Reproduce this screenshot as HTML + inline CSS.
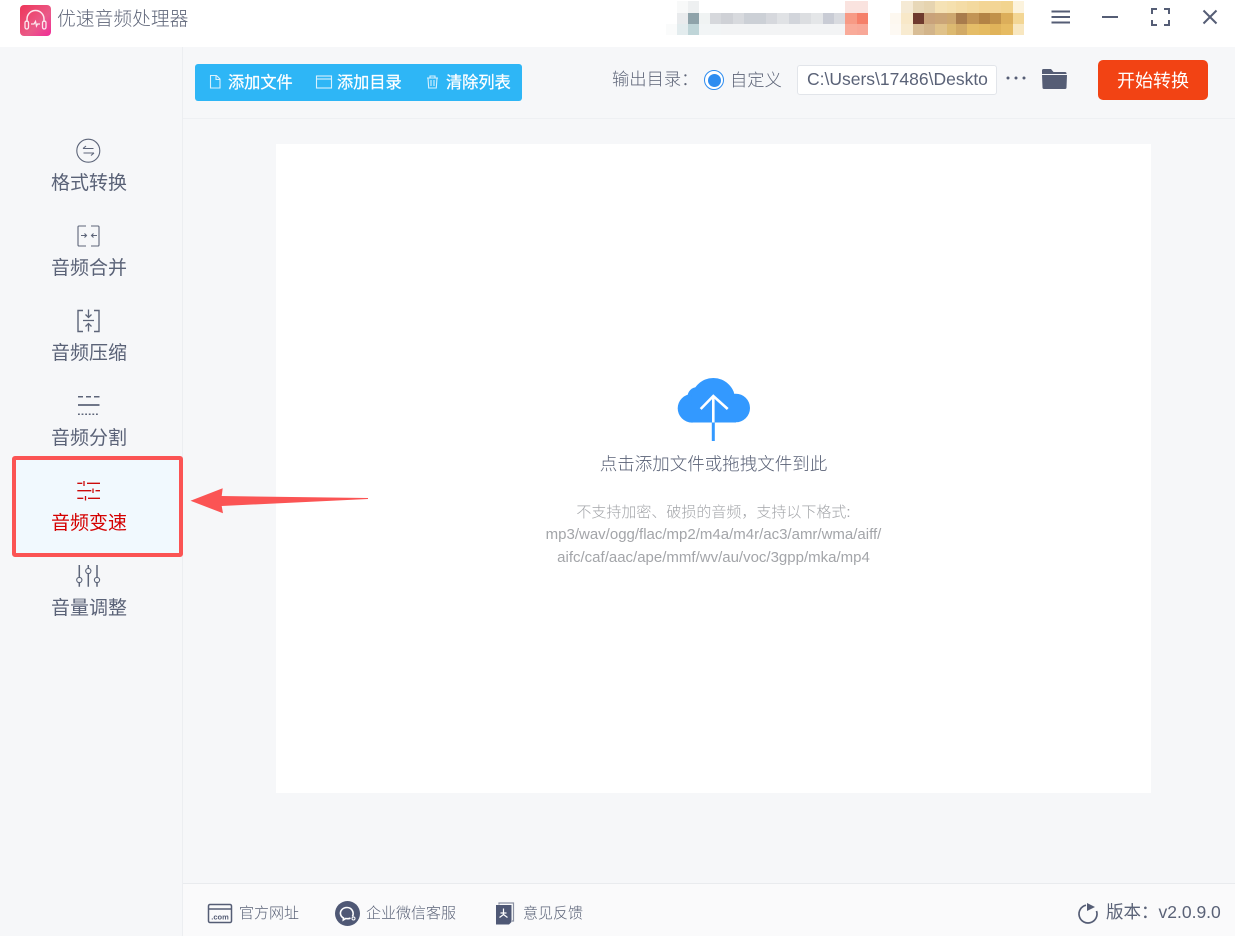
<!DOCTYPE html>
<html lang="zh"><head><meta charset="utf-8"><title>优速音频处理器</title>
<style>
*{margin:0;padding:0;box-sizing:border-box}
html,body{width:1235px;height:936px;overflow:hidden;background:#f6f7f9}
body{position:relative;font-family:"Liberation Sans","Noto Sans CJK SC",sans-serif;color:#5a6277}
.t{position:absolute;white-space:nowrap;line-height:1.2;font-weight:300}
.a{position:absolute;display:block}
.n{position:absolute;left:0;width:178px;text-align:center;font-size:19px;line-height:24px;color:#5a6277;white-space:nowrap}
</style></head><body>
<div class="a" style="left:0;top:0;width:1235px;height:47px;background:#fff"></div>
<div class="a" style="left:182px;top:47px;width:1px;height:889px;background:#eceef1"></div>
<div class="a" style="left:183px;top:118px;width:1052px;height:1px;background:#eef0f3"></div>
<div class="a" style="left:183px;top:883px;width:1052px;height:53px;background:#fafafb;border-top:1px solid #e9ebee"></div>
<div class="a" style="left:276px;top:144px;width:875px;height:649px;background:#fff"></div>

<!-- logo -->
<svg class="a" style="left:20px;top:5px" width="31" height="31" viewBox="0 0 31 31">
<defs><linearGradient id="g" x1="0" y1="0" x2="1" y2="1"><stop offset="0" stop-color="#ee3558"/><stop offset=".6" stop-color="#ea5a88"/><stop offset="1" stop-color="#f02c98"/></linearGradient></defs>
<rect width="31" height="31" rx="4" fill="url(#g)"/>
<path d="M7 17V14a8.500 8.500 0 0 1 17 0v3" fill="none" stroke="#fde6ee" stroke-width="1.500"/>
<rect x="5" y="16" width="3.500" height="8" rx="1.700" fill="none" stroke="#fde6ee" stroke-width="1.300"/>
<rect x="22.500" y="16" width="3.500" height="8" rx="1.700" fill="none" stroke="#fde6ee" stroke-width="1.300"/>
<path d="M11 19h3l1.500-2.500 1 4.500 1-2h2.500" fill="none" stroke="#fde6ee" stroke-width="1.300"/>
</svg>
<div class="t" style="left:57px;top:8px;font-size:18.800px;color:#5f6679">优速音频处理器</div>

<!-- blurred pixels -->
<svg class="a" style="left:0;top:0" width="1235" height="36" viewBox="0 0 1235 36" shape-rendering="crispEdges">
<rect x="677" y="1" width="11" height="12" fill="#f8f9f9"/><rect x="688" y="1" width="11" height="12" fill="#eef0f1"/>
<rect x="845" y="1" width="23" height="12" fill="#fae3df"/>
<rect x="677" y="13" width="11" height="11" fill="#e9ebed"/><rect x="688" y="13" width="11" height="11" fill="#8fa3aa"/><rect x="699" y="13" width="11" height="11" fill="#f0f3f3"/><rect x="710" y="13" width="11" height="11" fill="#d6d8dc"/><rect x="721" y="13" width="12" height="11" fill="#cfd1d6"/><rect x="733" y="13" width="11" height="11" fill="#d8dade"/><rect x="744" y="13" width="22" height="11" fill="#ccd0d6"/><rect x="766" y="13" width="11" height="11" fill="#d6d8dd"/><rect x="777" y="13" width="12" height="11" fill="#e0e2e5"/><rect x="789" y="13" width="11" height="11" fill="#d2d5db"/><rect x="800" y="13" width="11" height="11" fill="#dcdee1"/><rect x="811" y="13" width="12" height="11" fill="#e4e6e8"/><rect x="823" y="13" width="11" height="11" fill="#c9ccd5"/><rect x="834" y="13" width="11" height="11" fill="#d9dbe0"/><rect x="845" y="13" width="12" height="11" fill="#f79a85"/><rect x="857" y="13" width="11" height="11" fill="#f5806a"/>
<rect x="666" y="24" width="11" height="11" fill="#fafbfb"/><rect x="677" y="24" width="11" height="11" fill="#e3ecee"/><rect x="688" y="24" width="11" height="11" fill="#bfd5d8"/><rect x="699" y="24" width="22" height="11" fill="#f2f5f6"/><rect x="721" y="24" width="124" height="11" fill="#f3f4f5"/><rect x="845" y="24" width="12" height="11" fill="#f9ab9a"/><rect x="857" y="24" width="11" height="11" fill="#f8a898"/>

<rect x="901" y="1" width="12" height="12" fill="#f5ead5"/><rect x="913" y="1" width="11" height="12" fill="#e8d8b8"/><rect x="924" y="1" width="11" height="12" fill="#e6d4b0"/><rect x="935" y="1" width="12" height="12" fill="#f5e2b5"/><rect x="947" y="1" width="9" height="12" fill="#f5e0ae"/><rect x="956" y="1" width="11" height="12" fill="#f4dca6"/><rect x="967" y="1" width="12" height="12" fill="#f3d99e"/><rect x="979" y="1" width="22" height="12" fill="#f3d595"/><rect x="1001" y="1" width="12" height="12" fill="#f2d48f"/><rect x="1013" y="1" width="11" height="12" fill="#fcf3dd"/>
<rect x="890" y="13" width="11" height="11" fill="#fdf8f0"/><rect x="901" y="13" width="12" height="11" fill="#f8e8c8"/><rect x="913" y="13" width="11" height="11" fill="#6f3a2e"/><rect x="924" y="13" width="11" height="11" fill="#c9a27a"/><rect x="935" y="13" width="12" height="11" fill="#cba577"/><rect x="947" y="13" width="9" height="11" fill="#cda76f"/><rect x="956" y="13" width="11" height="11" fill="#a87b4c"/><rect x="967" y="13" width="12" height="11" fill="#c29455"/><rect x="979" y="13" width="11" height="11" fill="#b38345"/><rect x="990" y="13" width="11" height="11" fill="#c19149"/><rect x="1001" y="13" width="12" height="11" fill="#dcae5a"/><rect x="1013" y="13" width="11" height="11" fill="#f3d694"/>
<rect x="890" y="24" width="11" height="11" fill="#fdf9f3"/><rect x="901" y="24" width="12" height="11" fill="#f8ebd0"/><rect x="913" y="24" width="11" height="11" fill="#d8bd95"/><rect x="924" y="24" width="11" height="11" fill="#d2b48a"/><rect x="935" y="24" width="12" height="11" fill="#e0c28a"/><rect x="947" y="24" width="9" height="11" fill="#dcb970"/><rect x="956" y="24" width="11" height="11" fill="#d2aa66"/><rect x="967" y="24" width="12" height="11" fill="#e5bd68"/><rect x="979" y="24" width="11" height="11" fill="#e5bb62"/><rect x="990" y="24" width="11" height="11" fill="#e0b35a"/><rect x="1001" y="24" width="12" height="11" fill="#e6bb62"/><rect x="1013" y="24" width="11" height="11" fill="#f8e7c0"/>
</svg>

<!-- window controls -->
<svg class="a" style="left:1045px;top:0" width="190" height="36" viewBox="0 0 190 36" fill="none" stroke="#555d75" stroke-width="2">
<path d="M6.500 11.500h18.500M6.500 17h18.500M6.500 22.500h18.500"/>
<path d="M57 17h16"/>
<path d="M107 14V9h5M119 9h5v5M124 20v5h-5M112 25h-5v-5"/>
<path d="M158.500 10.500l13 13M171.500 10.500l-13 13"/>
</svg>

<!-- toolbar -->
<div class="a" style="left:195px;top:64px;width:327px;height:37px;background:#2eb6f6;border-radius:3px"></div>
<svg class="a" style="left:195px;top:63px" width="327" height="37" viewBox="0 0 327 37" fill="none" stroke="#d8f1fd" stroke-width="1.100">
<path d="M15.500 12.500h6l3.500 3.500V25h-9.500zM21 12.500v4h4"/>
<rect x="121.500" y="13" width="15" height="12"/><path d="M121.500 16h15"/>
<path d="M232 15h11M235 15v-2h5v2M233 15l.7 10h7.600l.7-10M236 17v6M239 17v6"/>
</svg>
<div class="t" style="left:228px;top:74px;font-size:16.200px;color:#fff;font-weight:400;-webkit-text-stroke:.25px #fff">添加文件</div>
<div class="t" style="left:337px;top:74px;font-size:16.200px;color:#fff;font-weight:400;-webkit-text-stroke:.25px #fff">添加目录</div>
<div class="t" style="left:446px;top:74px;font-size:16.200px;color:#fff;font-weight:400;-webkit-text-stroke:.25px #fff">清除列表</div>

<div class="t" style="left:612px;top:69px;font-size:17.300px;color:#5e6578">输出目录&#xFF1A;</div>
<div class="a" style="left:704px;top:70px;width:20px;height:20px;border-radius:50%;border:1.500px solid #2d8cf0;background:#fff"></div>
<div class="a" style="left:707.500px;top:73.500px;width:13px;height:13px;border-radius:50%;background:#2d8cf0"></div>
<div class="t" style="left:730px;top:70px;font-size:17.300px;color:#5e6578">自定义</div>
<div class="a" style="left:797px;top:65px;width:200px;height:30px;background:#fff;border:1px solid #e2e5ea;border-radius:3px"></div>
<div class="t" style="left:807px;top:69px;font-size:17.500px;line-height:20px;color:#5a6277;font-weight:400">C:\Users\17486\Deskto</div>
<svg class="a" style="left:1005px;top:74px" width="22" height="8"><circle cx="3" cy="4" r="1.500" fill="#555d75"/><circle cx="11" cy="4" r="1.500" fill="#555d75"/><circle cx="19" cy="4" r="1.500" fill="#555d75"/></svg>
<svg class="a" style="left:1041px;top:67px" width="27" height="24" viewBox="0 0 27 24"><path d="M1 3.500Q1 2 2.500 2H10l2.500 3H24q1.500 0 1.500 1.500V7H1z" fill="#555d75"/><path d="M1 8h25l-.5 12.500q0 1.500-1.500 1.500H3q-1.500 0-1.500-1.500z" fill="#555d75"/></svg>
<div class="a" style="left:1098px;top:60px;width:110px;height:40px;background:#f24314;border-radius:5px"></div>
<div class="t" style="left:1117px;top:71px;font-size:18px;color:#fff;font-weight:400">开始转换</div>

<!-- sidebar -->
<div class="a" style="left:11.500px;top:456px;width:171px;height:101px;background:#f1f9fe;border:4.500px solid #fb5454;border-radius:3px"></div>
<svg class="a" style="left:0;top:130px" width="178" height="500" viewBox="0 0 178 500" fill="none" stroke="#5d6579" stroke-width="1.100">
<circle cx="88.300" cy="20.700" r="11.500"/>
<path d="M83 18.500h10.500M83 18.500l3-2.500M94 23H83.500M94 23l-3 2.500"/>
<path d="M86 96h-7a1 1 0 0 0-1 1v18a1 1 0 0 0 1 1h7M91 96h7a1 1 0 0 1 1 1v18a1 1 0 0 1-1 1h-7"/>
<path d="M81 105.500h5M84.500 103.500l2 2-2 2M97 105.500h-5M93.500 103.500l-2 2 2 2"/>
<path d="M83 180.500h-5v21h5M94 180.500h5v21h-5" stroke-width="1.400"/>
<path d="M88.500 179.500v8M85.500 184.500l3 3 3-3M83 190.500h11M88.500 201.500v-8M85.500 196.500l3-3 3 3" stroke-width="1.300"/>
<path d="M78 266.700h5M86 266.700h5M94 266.700h5.500" stroke-width="1.500"/>
<path d="M78 275h21.500" stroke-width="1.700"/>
<path d="M78 284.300h21.500" stroke-width="1.500" stroke-dasharray="1.800 1.800"/>
<path d="M79.300 435v12.500M79.300 452.800v4M88.300 435v3.500M88.300 444v12.800M97 435v12.500M97 452.800v4" stroke-width="1.500"/>
<circle cx="79.300" cy="450" r="2.600"/><circle cx="88.300" cy="441" r="2.600"/><circle cx="97" cy="450" r="2.600"/>
</svg>
<svg class="a" style="left:76px;top:480px" width="26" height="22" viewBox="0 0 26 22" fill="none" stroke="#cc0a0a" stroke-width="1.300">
<path d="M1.300 3.300h5M11 3.300h13M8 1v5M1.300 10.700h14M19.500 10.700h4.500M17 8.500v4.500M1.300 18.300h6M12 18.300h12M9.500 16v4.500"/>
</svg>
<div class="n" style="top:172px">格式转换</div>
<div class="n" style="top:257px">音频合并</div>
<div class="n" style="top:342px">音频压缩</div>
<div class="n" style="top:427px">音频分割</div>
<div class="n" style="top:512px;color:#d40000">音频变速</div>
<div class="n" style="top:597px">音量调整</div>

<!-- arrow -->
<svg class="a" style="left:185px;top:480px" width="190" height="40" viewBox="0 0 190 40"><path d="M5.500 20.700L37.700 8.300 36.700 16 183 18v1L36.700 26 38 33.300z" fill="#fb5454"/></svg>

<!-- cloud -->
<svg class="a" style="left:670px;top:370px" width="90" height="75" viewBox="0 0 90 75">
<g fill="#3399ff"><circle cx="22" cy="38.300" r="14.300"/><circle cx="27" cy="26.700" r="9.500"/><circle cx="43.300" cy="30" r="22"/><circle cx="65.700" cy="38" r="14.300"/><rect x="22" y="38" width="44" height="14.500"/></g>
<path d="M43.300 52.500V71" stroke="#3399ff" stroke-width="3" fill="none"/>
<path d="M43.300 52.500V26M30.700 39L43.300 26 57.700 39" stroke="#fff" stroke-width="2.600" fill="none"/>
</svg>
<div class="t" style="left:276px;width:875px;top:454px;text-align:center;font-size:17.500px;color:#5a6277">点击添加文件或拖拽文件到此</div>
<div class="t" style="left:276px;width:875px;top:502px;text-align:center;font-size:15px;color:#a3a5a9;line-height:22.300px;white-space:normal">不支持加密、破损的音频&#xFF0C;支持以下格式:<br><span style="font-weight:400">mp3/wav/ogg/flac/mp2/m4a/m4r/ac3/amr/wma/aiff/</span><br><span style="font-weight:400">aifc/caf/aac/ape/mmf/wv/au/voc/3gpp/mka/mp4</span></div>

<!-- footer -->
<svg class="a" style="left:207px;top:903px" width="26" height="21" viewBox="0 0 26 21"><rect x="1.500" y="1.500" width="23" height="18" rx="1.500" fill="none" stroke="#555d75" stroke-width="1.500"/><path d="M1.500 6h23" stroke="#555d75" stroke-width="1.500"/><text x="13" y="16.500" text-anchor="middle" font-size="7.500" font-weight="700" fill="#555d75" font-family="Liberation Sans">.com</text></svg>
<div class="t" style="left:239px;top:905px;font-size:15px;color:#5a6277">官方网址</div>
<svg class="a" style="left:335px;top:901px" width="25" height="25" viewBox="0 0 25 25"><circle cx="12.500" cy="12.500" r="12.500" fill="#4f5875"/><path d="M17.500 15.500C19.500 11 16.500 6.500 12 6.500S5 10 5.500 13c.4 2.300 2 3.500 3 4l-.2 2 2.500-1.500c2 .4 3.500.2 4.700-.5" fill="none" stroke="#fff" stroke-width="1.600"/><circle cx="18.500" cy="17.500" r="1.500" fill="none" stroke="#fff" stroke-width="1"/></svg>
<div class="t" style="left:366px;top:905px;font-size:15px;color:#5a6277">企业微信客服</div>
<svg class="a" style="left:495px;top:902px" width="20" height="23" viewBox="0 0 20 23"><path d="M4 2.500V1h14.500v18H17" fill="none" stroke="#8b91a2" stroke-width="1.200"/><path d="M1 3h15.500v17l-2.500 2.500H1z" fill="#4f5875"/><path d="M8.500 6.500v6.500M8.500 12.500l-4 3M8.500 12.500l4 3M5.500 11h6" fill="none" stroke="#fff" stroke-width="1.200"/></svg>
<div class="t" style="left:523px;top:905px;font-size:15px;color:#5a6277">意见反馈</div>
<svg class="a" style="left:1077px;top:901px" width="22" height="24" viewBox="0 0 22 24" fill="none"><path d="M9 4.200A9 9 0 1 0 19.500 10" stroke="#555d75" stroke-width="1.700"/><path d="M10 2l8 4-8 4z" fill="#555d75"/></svg>
<div class="t" style="left:1106px;top:902px;font-size:17.500px;color:#5a6277;font-weight:400">版本&#xFF1A;v2.0.9.0</div>
</body></html>
